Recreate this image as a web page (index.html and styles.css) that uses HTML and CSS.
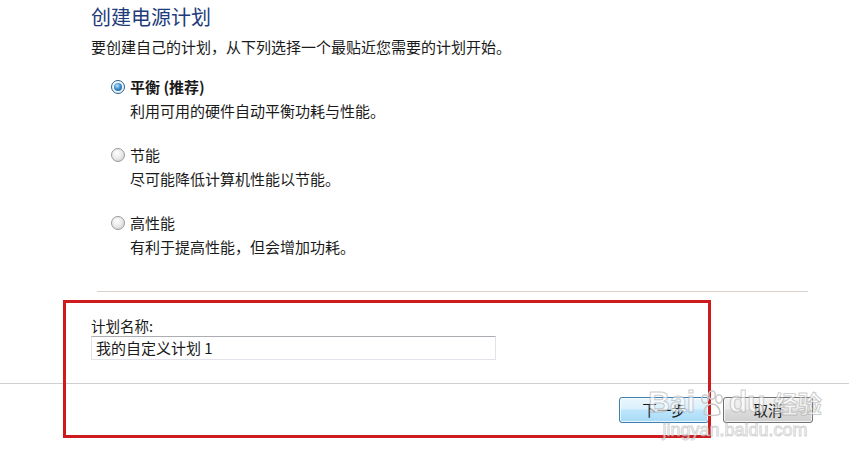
FILE: index.html
```html
<!DOCTYPE html>
<html lang="zh-CN">
<head>
<meta charset="utf-8">
<title>创建电源计划</title>
<link rel="stylesheet" href="styles.css">
</head>
<body>
<div class="page">
  <div class="content">
    <h1 class="title">创建电源计划</h1>
    <p class="intro">要创建自己的计划，从下列选择一个最贴近您需要的计划开始。</p>

    <div class="options">
      <div class="option">
        <div class="opt-row">
          <span class="radio checked"><span class="dot"></span></span>
          <span class="opt-label bold">平衡 (推荐)</span>
        </div>
        <div class="opt-desc">利用可用的硬件自动平衡功耗与性能。</div>
      </div>
      <div class="option">
        <div class="opt-row">
          <span class="radio"></span>
          <span class="opt-label">节能</span>
        </div>
        <div class="opt-desc">尽可能降低计算机性能以节能。</div>
      </div>
      <div class="option">
        <div class="opt-row">
          <span class="radio"></span>
          <span class="opt-label">高性能</span>
        </div>
        <div class="opt-desc">有利于提高性能，但会增加功耗。</div>
      </div>
    </div>

    <div class="sep"></div>

    <div class="name-field">
      <label class="name-label">计划名称:</label>
      <div class="textbox">我的自定义计划 1</div>
    </div>
  </div>

  <div class="footer">
    <button class="btn primary">下一步</button>
    <button class="btn">取消</button>
  </div>

  <div class="highlight"></div>

  <div class="watermark">
    <div class="wm-top">
      <span class="wm-bai">Bai</span>
      <svg class="wm-paw" width="30" height="30" viewBox="0 0 30 30">
        <g fill="none" stroke="#c8c8c8" stroke-width="1.5">
          <ellipse cx="8" cy="10" rx="3.2" ry="4.2"/>
          <ellipse cx="15" cy="6" rx="3.2" ry="4.2"/>
          <ellipse cx="22" cy="10" rx="3.2" ry="4.2"/>
          <path d="M7 25 C7 18 11 15 15 15 C19 15 23 18 23 25 C20 27 10 27 7 25 Z"/>
        </g>
      </svg>
      <span class="wm-du">du</span>
      <span class="wm-jy">经验</span>
    </div>
    <div class="wm-url">jingyan.baidu.com</div>
  </div>
</div>
</body>
</html>
```

FILE: styles.css
```css
html, body {
  margin: 0;
  padding: 0;
  background: #ffffff;
}

.page {
  position: relative;
  width: 849px;
  height: 472px;
  overflow: hidden;
  font-family: "Noto Sans CJK SC", "Noto Sans", sans-serif;
  color: #1a1a1a;
}

.content {
  padding-left: 91px;
  padding-top: 4px;
}

.title {
  margin: 0;
  font-size: 20px;
  line-height: 26px;
  font-weight: normal;
  color: #1e3b7c;
}

.intro {
  margin: 7px 0 0;
  font-size: 15px;
  line-height: 20px;
}

.options {
  display: flex;
  flex-direction: column;
  gap: 20px;
  margin-top: 18px;
  padding-left: 20px;
}

.opt-row {
  display: flex;
  align-items: center;
  height: 24px;
}

.radio {
  width: 14px;
  height: 14px;
  border-radius: 50%;
  box-sizing: border-box;
  border: 1px solid #9a9a9a;
  background: radial-gradient(circle at 40% 35%, #ffffff 0%, #e6e6e6 55%, #c4c4c4 100%);
  display: flex;
  align-items: center;
  justify-content: center;
  margin-right: 5px;
  flex: none;
}

.radio.checked {
  border-color: #2c628b;
  background: radial-gradient(circle at 40% 35%, #ffffff 0%, #eef4f8 60%, #cddbe6 100%);
}

.radio .dot {
  width: 8px;
  height: 8px;
  border-radius: 50%;
  background: radial-gradient(circle at 40% 35%, #bfe6ff 0%, #3c8fd0 45%, #16508a 100%);
}

.opt-label {
  font-size: 15px;
  line-height: 24px;
}

.opt-label.bold {
  font-weight: bold;
}

.opt-desc {
  padding-left: 19px;
  font-size: 15px;
  line-height: 24px;
}

.sep {
  margin: 32px 0 0 6px;
  width: 711px;
  height: 1px;
  background: #d9d2cc;
}

.name-field {
  margin-top: 24px;
  display: flex;
  flex-direction: column;
}

.name-label {
  font-size: 14.5px;
  line-height: 20px;
}

.textbox {
  width: 405px;
  height: 24px;
  box-sizing: border-box;
  border: 1px solid #e2e3ea;
  border-top-color: #abadb3;
  padding: 0 4px;
  font-size: 15px;
  line-height: 22px;
}

.footer {
  margin-top: 23px;
  border-top: 1px solid #cfcfcf;
  padding: 13px 36px 0 0;
  display: flex;
  justify-content: flex-end;
  gap: 14px;
}

.btn {
  width: 90px;
  height: 26px;
  box-sizing: border-box;
  border: 1px solid #707070;
  border-radius: 3px;
  background: linear-gradient(#f2f2f2 0%, #ebebeb 45%, #dddddd 50%, #cfcfcf 100%);
  font-family: "Noto Sans CJK SC", sans-serif;
  font-size: 14.5px;
  line-height: 22px;
  color: #1a1a1a;
  padding: 0;
  box-shadow: inset 0 0 0 1px rgba(255,255,255,0.7);
}

.btn.primary {
  border-color: #3c7fb1;
  background: linear-gradient(#eaf6fd 0%, #d9f0fc 45%, #bee6fd 50%, #a7d9f5 100%);
}

.highlight {
  position: absolute;
  left: 63px;
  top: 300px;
  width: 648px;
  height: 138px;
  box-sizing: border-box;
  border: 3px solid #cc1a1f;
}

.watermark {
  position: absolute;
  left: 645px;
  top: 385px;
  width: 180px;
  text-align: center;
  font-family: "Liberation Sans", sans-serif;
  pointer-events: none;
}

.wm-top {
  display: flex;
  align-items: flex-end;
  justify-content: center;
  gap: 2px;
}

.wm-bai, .wm-du {
  font-size: 30px;
  font-weight: bold;
  line-height: 34px;
  color: rgba(255,255,255,0.6);
  -webkit-text-stroke: 1px rgba(160,160,160,0.55);
}

.wm-jy {
  font-family: "Noto Sans CJK SC", sans-serif;
  font-size: 24px;
  line-height: 32px;
  font-weight: bold;
  color: rgba(255,255,255,0.6);
  -webkit-text-stroke: 1px rgba(160,160,160,0.55);
  margin-left: 6px;
}

.wm-url {
  font-size: 18px;
  line-height: 22px;
  color: rgba(255,255,255,0.6);
  -webkit-text-stroke: 1px rgba(170,170,170,0.5);
}
```
